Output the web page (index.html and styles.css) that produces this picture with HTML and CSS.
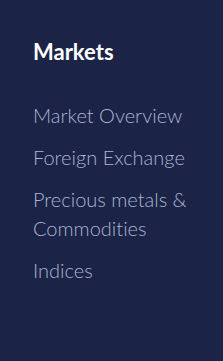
FILE: index.html
```html
<!DOCTYPE html>
<html lang="en">
<head>
    <meta charset="UTF-8">
    <meta name="viewport" content="width=device-width, initial-scale=1.0">
    <title>Markets</title>
    <link rel="stylesheet" href="styles.css">
</head>
<body>
    <nav class="menu">
        <h2 class="menu-title">Markets</h2>
        <ul class="menu-list">
            <li><a href="#">Market Overview</a></li>
            <li><a href="#">Foreign Exchange</a></li>
            <li><a href="#">Precious metals &amp; Commodities</a></li>
            <li><a href="#">Indices</a></li>
        </ul>
    </nav>
</body>
</html>
```

FILE: styles.css
```css
:root {
    --bg: #1b2346;
    --title: #ffffff;
    --link: #aab5d2;
}

html, body {
    margin: 0;
    height: 100%;
}

body {
    font-family: "Lato", "Open Sans", sans-serif;
    font-variant-ligatures: none;
    background: var(--bg);
}

.menu {
    padding: 37px 14px 0 33px;
}

.menu-title {
    margin: 0;
    font-size: 22px;
    font-weight: 700;
    line-height: 30px;
    color: var(--title);
}

.menu-list {
    list-style: none;
    margin: 34px 0 0;
    padding: 0;
    display: flex;
    flex-direction: column;
    gap: 13px;
}

.menu-list a {
    display: block;
    font-size: 20px;
    font-weight: 300;
    line-height: 29px;
    color: var(--link);
    text-decoration: none;
}
```
